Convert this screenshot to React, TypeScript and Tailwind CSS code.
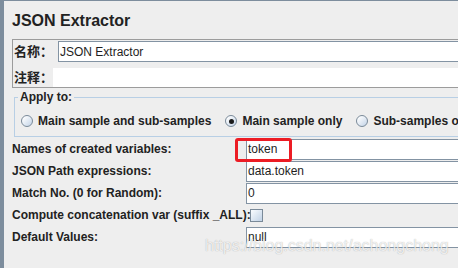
import React from "react";

function Radio({ checked }: { checked?: boolean }) {
  return (
    <span className="relative flex h-[12px] w-[12px] shrink-0 items-center justify-center rounded-full border border-[#7a8a99] bg-[linear-gradient(135deg,#ffffff_10%,#c9d8ea_90%)]">
      {checked && <span className="h-[5px] w-[5px] rounded-full bg-[#1a1a1a]" />}
    </span>
  );
}

function Field({ value }: { value?: string }) {
  return (
    <div className="flex h-[21px] flex-1 items-center border border-r-0 border-[#8393a3] bg-white pl-[1px] text-[12px] font-normal text-[#1e1e1e]">
      {value}
    </div>
  );
}

export default function App() {
  return (
    <div className="relative h-[268px] w-[458px] overflow-hidden border-l-4 border-t border-[#7d8d9d] bg-[#eeeeee] font-['Liberation_Sans',Arial,sans-serif] text-[#222222]">
      <div className="pl-[8px]">
        <h1 className="mt-[11px] text-[16px] font-bold leading-[18px] text-[#222]">JSON Extractor</h1>

        <div className="mt-[9px] border border-r-0 border-[#9c9c9c] pt-[1px]">
          <div className="flex h-[21px] items-center">
            <span className="w-[45px] pl-[1px] font-['Liberation_Sans','Noto_Sans_CJK_SC',sans-serif] text-[13px] font-bold leading-[15px]">
              名称：
            </span>
            <Field value="JSON Extractor" />
          </div>
          <div className="mt-[6px] flex h-[19px] items-center">
            <span className="w-[40px] pl-[1px] font-['Liberation_Sans','Noto_Sans_CJK_SC',sans-serif] text-[13px] font-bold leading-[15px]">
              注释：
            </span>
            <div className="h-[19px] flex-1 bg-white" />
          </div>
        </div>

        <fieldset className="ml-[2px] mt-[2px] border border-r-0 border-[#b8cfe5] pb-[3px] pl-[6px] pt-[5px]">
          <legend className="ml-[-3px] px-[2px] text-[12px] font-bold leading-[14px]">Apply to:</legend>
          <div className="flex h-[24px] items-center gap-[14px] whitespace-nowrap text-[12px] font-bold">
            <label className="flex items-center gap-[5px]">
              <Radio />
              <span>Main sample and sub-samples</span>
            </label>
            <label className="flex items-center gap-[5px]">
              <Radio checked />
              <span>Main sample only</span>
            </label>
            <label className="flex items-center gap-[5px]">
              <Radio />
              <span>Sub-samples only</span>
            </label>
          </div>
        </fieldset>

        <div className="mt-[1px] grid grid-cols-[234px_1fr] text-[12px] font-bold leading-[14px]">
          <div className="flex h-[22px] items-center">Names of created variables:</div>
          <div className="flex h-[22px] items-center">
            <Field value="token" />
          </div>
          <div className="flex h-[22px] items-center">JSON Path expressions:</div>
          <div className="flex h-[22px] items-center">
            <Field value="data.token" />
          </div>
          <div className="flex h-[22px] items-center">Match No. (0 for Random):</div>
          <div className="flex h-[22px] items-center">
            <Field value="0" />
          </div>
          <div className="flex h-[22px] items-center whitespace-nowrap">Compute concatenation var (suffix _ALL):</div>
          <div className="flex h-[22px] items-center">
            <span className="ml-[4px] h-[13px] w-[13px] border border-[#7a8a99] bg-[linear-gradient(135deg,#f4f8fc_10%,#c6d6e8_90%)]" />
          </div>
          <div className="flex h-[22px] items-center">Default Values:</div>
          <div className="flex h-[22px] items-center">
            <Field value="null" />
          </div>
        </div>
      </div>

      <div className="absolute left-[231px] top-[137px] h-[24px] w-[57px] rounded-[3px] border-[3px] border-[#ec1c24]" />

      <div className="absolute left-[201px] top-[236px] whitespace-nowrap text-[16px] leading-[18px] text-white/80 [text-shadow:0_0_1px_rgba(0,0,0,0.35)]">
        https://blog.csdn.net/achongchong
      </div>
    </div>
  );
}
